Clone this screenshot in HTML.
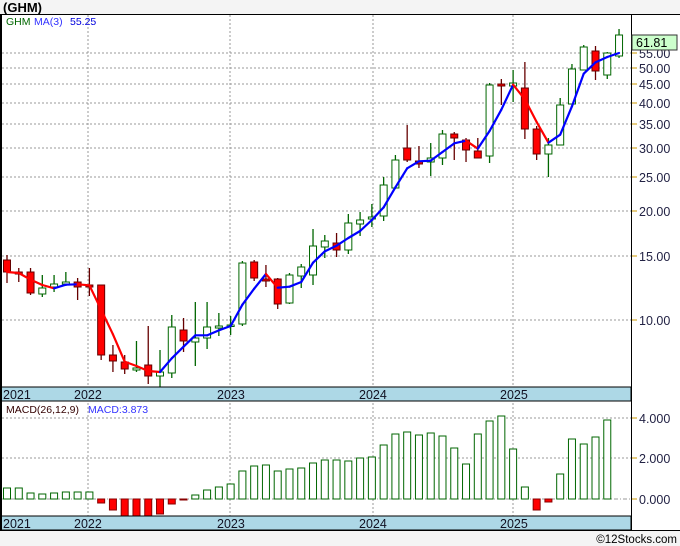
<!DOCTYPE html><html><head><meta charset="utf-8"><style>
body{margin:0;width:680px;height:546px;background:#f4f4f4;overflow:hidden;font-family:"Liberation Sans",sans-serif}
svg{position:absolute;left:0;top:0}
</style></head><body>
<svg id="s" width="680" height="546" xmlns="http://www.w3.org/2000/svg" font-family="Liberation Sans, sans-serif"></svg>
<script>
var S='';
function a(x){S+=x;}
a('<rect x="0" y="14" width="680" height="516" fill="#fff"/>');
a('<text x="3" y="12" font-size="13" font-weight="bold" fill="#000">(GHM)</text>');
// grid
var gx=[88,230,373,513];
gx.forEach(function(x){a('<line x1="'+x+'" y1="15" x2="'+x+'" y2="530" stroke="#999" stroke-dasharray="2,2"/>');});
var lv=[[55,53],[50,68],[45,84],[40,103],[35,124],[30,148],[25,177],[20,211],[15,256],[10,320]];
lv.forEach(function(l){a('<line x1="2" y1="'+l[1]+'" x2="631" y2="'+l[1]+'" stroke="#999" stroke-dasharray="2,2"/>');
a('<line x1="631" y1="'+l[1]+'" x2="637" y2="'+l[1]+'" stroke="#c90"/>');
a('<text x="639" y="'+(l[1]+5)+'" font-size="12.5" fill="#224">'+l[0]+'.00</text>');});
[418,458].forEach(function(y){a('<line x1="2" y1="'+y+'" x2="631" y2="'+y+'" stroke="#999" stroke-dasharray="2,2"/>');});
a('<line x1="2" y1="499" x2="631" y2="499" stroke="#999" stroke-dasharray="4,2,1,2"/>');
[[418,'4.000'],[458,'2.000'],[499,'0.000']].forEach(function(l){a('<line x1="631" y1="'+l[0]+'" x2="637" y2="'+l[0]+'" stroke="#c90"/><text x="639" y="'+(l[0]+5)+'" font-size="12.5" fill="#224">'+l[1]+'</text>');});
// candles [top,bottom,wickTop,wickBot,green]
var C=[[260,272,255,283,0],[272,274,268,282,0],[272,293,268,295,0],[288,294,275,297,1],[284,287,275,292,1],[282,284,272,286,1],[282,287,278,300,0],[285,287,268,296,0],[285,355,285,360,0],[355,361,345,372,0],[362,369,355,374,0],[368,370,341,372,1],[365,376,326,384,0],[372,376,350,387,1],[327,373,315,378,1],[330,341,318,352,0],[338,342,302,366,1],[327,338,302,349,1],[326,328,313,336,1],[325,326,316,335,1],[263,324,261,326,1],[262,278,260,281,0],[279,281,265,287,0],[279,304,278,309,0],[275,303,273,304,1],[267,276,264,288,1],[246,275,229,285,1],[241,247,235,258,1],[243,250,233,257,0],[223,250,214,254,1],[220,224,212,236,1],[217,219,204,227,1],[185,216,177,221,1],[160,188,155,189,1],[148,160,125,162,0],[161,164,146,168,0],[158,162,143,176,1],[134,158,130,165,1],[134,138,132,160,0],[140,150,138,162,0],[151,158,138,158,0],[85,156,83,163,1],[84,86,79,105,0],[83,86,70,102,1],[88,129,62,139,0],[129,154,126,160,0],[145,154,138,177,1],[105,145,98,145,1],[69,104,64,104,1],[47,70,45,70,1],[51,71,46,80,0],[53,75,52,79,1],[35,56,29,58,1]];
var X=function(i){return 7+i*11.77;};
var cl=[];
C.forEach(function(c,i){var x=X(i),g=c[4];var col=g?'#060':'#600';
a('<line x1="'+x+'" y1="'+c[2]+'" x2="'+x+'" y2="'+c[3]+'" stroke="'+col+'" stroke-width="1.3"/>');
var h=Math.max(c[1]-c[0],1.5);
a('<rect x="'+(x-3.5)+'" y="'+c[0]+'" width="7" height="'+h+'" fill="'+(g?'#fff':'#f00')+'" stroke="'+(g?'#060':'#600')+'"/>');
cl.push(g?c[0]:c[1]);});
var ma=[];for(var i=0;i<C.length;i++){var s=0,n=0;for(var j=Math.max(0,i-2);j<=i;j++){s+=cl[j];n++;}ma.push(s/n);}
for(var i=1;i<ma.length;i++){var col=ma[i]>ma[i-1]+0.3?'#f00':'#00f';
a('<line x1="'+X(i-1)+'" y1="'+ma[i-1]+'" x2="'+X(i)+'" y2="'+ma[i]+'" stroke="'+col+'" stroke-width="2.2" stroke-linecap="round"/>');}
a('<text x="6" y="25" font-size="10.5" fill="#060">GHM</text><text x="34" y="25" font-size="10.5" fill="#33f">MA(3)</text><text x="70" y="25" font-size="10.5" fill="#00d">55.25</text>');
// macd
var M=[488,488,493,494,493,492,492,492,503,510,516,516,516,514,504,500,495,490,487,484,471,466,465,471,469,468,463,460,460,461,458,457,445,434,432,435,433,436,448,464,434,421,416,449,487,510,502,474,439,444,437,420];
M.forEach(function(y,i){var x=X(i);var g=y<499;
var t=Math.min(y,499),b=Math.max(y,499);
a('<rect x="'+(x-3.5)+'" y="'+t+'" width="7" height="'+(b-t)+'" fill="'+(g?'#fff':'#f00')+'" stroke="'+(g?'#060':'#800')+'"/>');});
a('<text x="6" y="413" font-size="10.5" fill="#300">MACD(26,12,9)</text><text x="88" y="413" font-size="10.5" fill="#33f">MACD:3.873</text>');
// bands
[[387,401],[516,530]].forEach(function(b){a('<rect x="1" y="'+b[0]+'" width="630" height="'+(b[1]-b[0])+'" fill="#add8e6" stroke="#000"/>');
[[3,'2021'],[74,'2022'],[217,'2023'],[359,'2024'],[500,'2025']].forEach(function(t){a('<text x="'+t[0]+'" y="'+(b[0]+12)+'" font-size="12.5" fill="#112">'+t[1]+'</text>');});});
a('<line x1="0" y1="14.5" x2="680" y2="14.5" stroke="#000"/><line x1="1" y1="14" x2="1" y2="530" stroke="#000" stroke-width="2"/><line x1="631.5" y1="14" x2="631.5" y2="530" stroke="#000"/><line x1="0" y1="530.5" x2="680" y2="530.5" stroke="#000"/>');
a('<rect x="632" y="35" width="45" height="15" fill="#ccffcc" stroke="#333"/><text x="636" y="47" font-size="12.5" fill="#000">61.81</text>');
a('<text x="677" y="543" font-size="11.5" fill="#000" text-anchor="end">©12Stocks.com</text>');
document.getElementById('s').innerHTML=S;
</script></body></html>
